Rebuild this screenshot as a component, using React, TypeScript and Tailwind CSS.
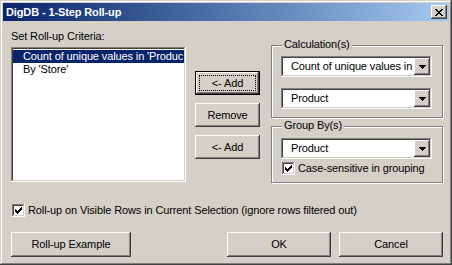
import React from "react";

const raised =
  "shadow-[inset_-1px_-1px_#404040,inset_1px_1px_#fff,inset_-2px_-2px_#808080,inset_2px_2px_#d4d0c8]";
const sunken =
  "shadow-[inset_-1px_-1px_#fff,inset_1px_1px_#808080,inset_-2px_-2px_#d4d0c8,inset_2px_2px_#404040]";

// pixel glyphs: [x, y, w] runs of 1px height
const closeRuns: number[][] = [
  [0, 0, 2], [6, 0, 2],
  [1, 1, 2], [5, 1, 2],
  [2, 2, 4],
  [3, 3, 2],
  [2, 4, 4],
  [1, 5, 2], [5, 5, 2],
  [0, 6, 2], [6, 6, 2],
];

const checkRuns: number[][] = [
  [6, 0, 1],
  [5, 1, 2],
  [0, 2, 1], [4, 2, 3],
  [0, 3, 2], [3, 3, 3],
  [0, 4, 5],
  [1, 5, 3],
  [2, 6, 1],
];

const arrowRuns: number[][] = [
  [0, 0, 7],
  [1, 1, 5],
  [2, 2, 3],
  [3, 3, 1],
];

const Glyph = ({ runs, w, h }: { runs: number[][]; w: number; h: number }) => (
  <svg width={w} height={h} viewBox={`0 0 ${w} ${h}`} shapeRendering="crispEdges">
    {runs.map(([x, y, len], i) => (
      <rect key={i} x={x} y={y} width={len} height={1} fill="#000" />
    ))}
  </svg>
);

const Button = ({ label, className = "" }: { label: string; className?: string }) => (
  <button className={`flex items-center justify-center bg-[#d4d0c8] ${raised} ${className}`}>
    {label}
  </button>
);

const DefaultButton = ({ label, className = "" }: { label: string; className?: string }) => (
  <button
    className={`flex p-[4px] bg-[#d4d0c8] shadow-[inset_0_0_0_1px_#000,inset_-2px_-2px_#404040,inset_2px_2px_#fff,inset_-3px_-3px_#808080] ${className}`}
  >
    <span className="flex-1 flex items-center justify-center border border-dotted border-black">
      {label}
    </span>
  </button>
);

const Combo = ({ value, className = "" }: { value: string; className?: string }) => (
  <div className={`w-[151px] h-[21px] flex p-[2px] bg-white ${sunken} ${className}`}>
    <span className="flex-1 pl-[8px] leading-[17px] whitespace-nowrap overflow-hidden">{value}</span>
    <div className={`w-[16px] h-[17px] flex items-center justify-center bg-[#d4d0c8] ${raised}`}>
      <Glyph runs={arrowRuns} w={7} h={4} />
    </div>
  </div>
);

const Checkbox = () => (
  <div className={`w-[13px] h-[13px] flex items-center justify-center bg-white ${sunken}`}>
    <Glyph runs={checkRuns} w={7} h={7} />
  </div>
);

const GroupBox = ({
  title,
  className = "",
  children,
}: {
  title: string;
  className?: string;
  children: React.ReactNode;
}) => (
  <div
    className={`relative flex flex-col border border-[#808080] shadow-[inset_1px_1px_#fff,1px_1px_#fff] px-[9px] ${className}`}
  >
    <span className="absolute -top-[8px] left-[10px] px-[2px] leading-[13px] bg-[#d4d0c8]">
      {title}
    </span>
    {children}
  </div>
);

// text as the controls show it (cut by the control width)
const criteria = ["Count of unique values in 'Produc", "By 'Store'"];

export default function App() {
  return (
    <div
      className="w-[452px] h-[265px] flex flex-col p-[3px] bg-[#d4d0c8] text-[11px] tracking-[-0.12px] text-black font-['Liberation_Sans',Arial,sans-serif] shadow-[inset_-1px_-1px_#404040,inset_1px_1px_#d4d0c8,inset_-2px_-2px_#808080,inset_2px_2px_#fff]"
    >
      {/* Title bar */}
      <div className="h-[18px] flex items-center pl-[3px] pr-[2px] bg-gradient-to-r from-[#0a246a] to-[#a6caf0]">
        <span className="flex-1 font-bold text-white leading-[13px]">DigDB - 1-Step Roll-up</span>
        <button className={`w-[16px] h-[14px] flex items-center justify-center bg-[#d4d0c8] ${raised}`}>
          <Glyph runs={closeRuns} w={8} h={7} />
        </button>
      </div>

      <div className="flex-1 flex flex-col pl-[8px] pr-[6px]">
        <div className="flex items-start">
          {/* Criteria list */}
          <div className="w-[175px] mt-[9px] flex flex-col">
            <span className="leading-[13px]">Set Roll-up Criteria:</span>
            <div className={`mt-[4px] h-[135px] p-[2px] pt-[3px] bg-white ${sunken}`}>
              {criteria.map((c, i) => (
                <div
                  key={c}
                  className={`h-[13px] leading-[13px] pl-[10px] whitespace-nowrap ${
                    i === 0 ? "bg-[#0a246a] text-white" : ""
                  }`}
                >
                  {c}
                </div>
              ))}
            </div>
          </div>

          {/* Add / remove */}
          <div className="ml-[9px] mt-[50px] flex flex-col gap-[8px]">
            <DefaultButton label="<- Add" className="w-[65px] h-[24px]" />
            <Button label="Remove" className="w-[65px] h-[24px]" />
            <Button label="<- Add" className="w-[65px] h-[24px]" />
          </div>

          {/* Calculation / group by */}
          <div className="ml-[11px] w-[172px] mt-[24px] flex flex-col">
            <GroupBox title="Calculation(s)" className="h-[73px] pt-[10px] gap-[11px]">
              <Combo value="Count of unique values in" />
              <Combo value="Product" />
            </GroupBox>
            <GroupBox title="Group By(s)" className="mt-[8px] h-[57px] pt-[11px]">
              <Combo value="Product" />
              <label className="mt-[3px] ml-[1px] flex items-center gap-[3px] leading-[13px]">
                <Checkbox />
                <span>Case-sensitive in grouping</span>
              </label>
            </GroupBox>
          </div>
        </div>

        <label className="mt-[21px] ml-[1px] flex items-center gap-[3px] leading-[13px]">
          <Checkbox />
          <span>Roll-up on Visible Rows in Current Selection (ignore rows filtered out)</span>
        </label>

        <div className="mt-[15px] flex">
          <Button label="Roll-up Example" className="w-[120px] h-[25px]" />
          <Button label="OK" className="ml-auto w-[104px] h-[25px]" />
          <Button label="Cancel" className="ml-[8px] w-[104px] h-[25px]" />
        </div>
      </div>
    </div>
  );
}
